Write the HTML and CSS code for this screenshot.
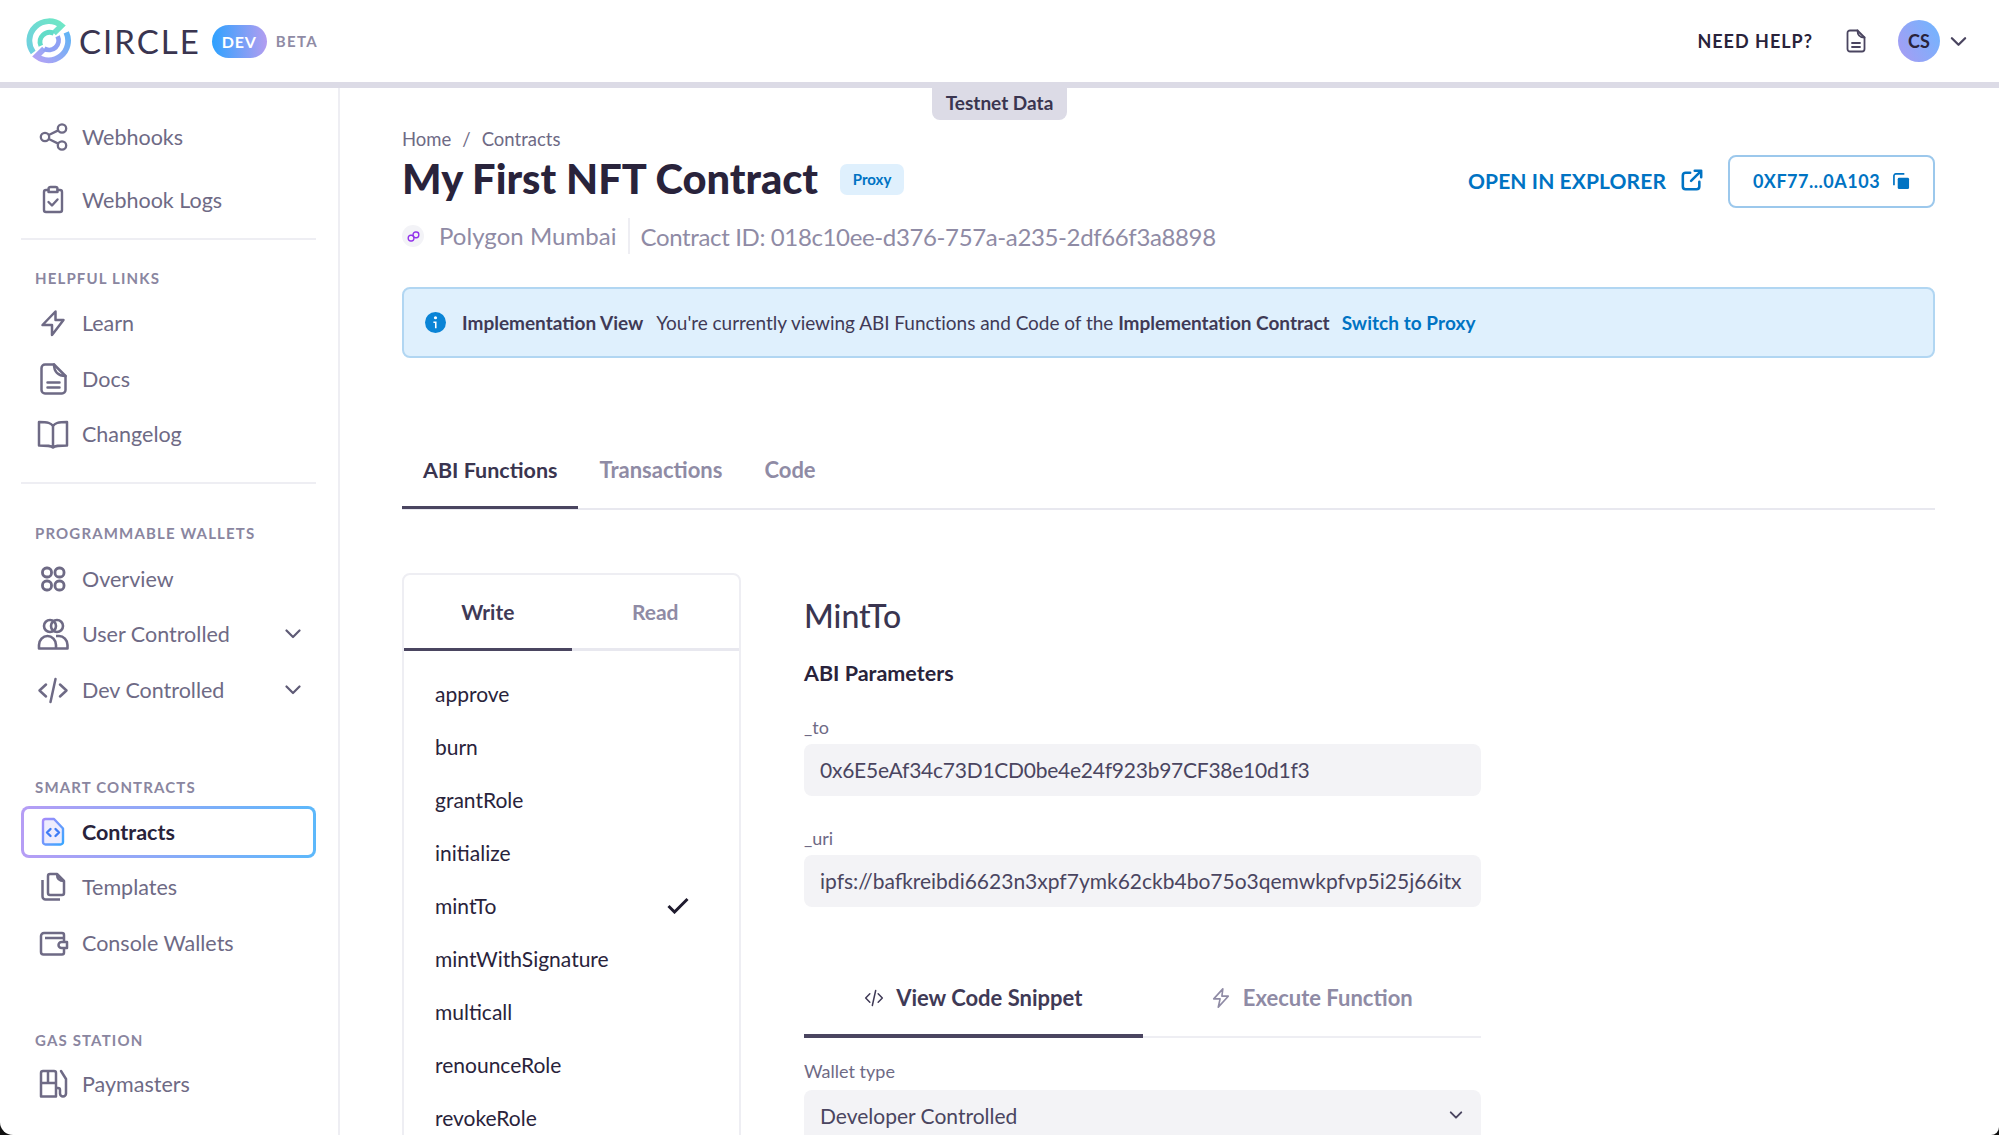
FILE: index.html
```html
<!DOCTYPE html>
<html lang="en">
<head>
<meta charset="utf-8">
<title>Circle Developer Console</title>
<link rel="stylesheet" href="styles.css">
</head>
<body>
<svg class="defs" width="0" height="0" aria-hidden="true">
  <defs>
    <linearGradient id="g-purple-blue" x1="0" y1="0" x2="1" y2="1"><stop offset="0" stop-color="#a78bfa"/><stop offset="1" stop-color="#38a6ff"/></linearGradient>
    <linearGradient id="g-logo-top" x1="0" y1="1" x2="1" y2="0"><stop offset="0" stop-color="#6fcfe0"/><stop offset="1" stop-color="#6ee7c5"/></linearGradient>
    <linearGradient id="g-logo-bot" x1="0" y1="1" x2="1" y2="0"><stop offset="0" stop-color="#b3a2f5"/><stop offset="1" stop-color="#5fb4f5"/></linearGradient>
  </defs>
</svg>
<div class="app">
  <header class="topbar">
    <div class="brand">
      <svg class="logo" viewBox="0 0 48 48" fill="none">
        <path d="M7.500 36A20.500 20.500 0 0 1 37 8L29 16" stroke="url(#g-logo-top)" stroke-width="6"/>
        <path d="M15.500 29A10 10 0 0 1 29 16" stroke="#62dcc8" stroke-width="5"/>
        <path d="M42 15A20.500 20.500 0 0 1 11 40L19 32" stroke="url(#g-logo-bot)" stroke-width="6"/>
        <path d="M33 19A10 10 0 0 1 19 32" stroke="#8ea0f4" stroke-width="5"/>
      </svg>
      <span class="wordmark">CIRCLE</span>
      <span class="dev-pill">DEV</span>
      <span class="beta">BETA</span>
    </div>
    <div class="top-actions">
      <span class="need-help">NEED HELP?</span>
      <svg class="doc-top" viewBox="0 0 20 24" fill="none" stroke="#4a4560" stroke-width="1.800" stroke-linejoin="round" stroke-linecap="round"><path d="M4 1.500h7.500l7 7V20a2.500 2.500 0 0 1-2.500 2.500H4A2.500 2.500 0 0 1 1.500 20V4A2.500 2.500 0 0 1 4 1.500z"/><path d="M11.500 1.500c0 4.500 2 7 7 7M6 14h8M6 18h8"/></svg>
      <span class="avatar">CS</span>
      <svg class="chev-top" viewBox="0 0 18 11" fill="none" stroke="#4a4560" stroke-width="2.400" stroke-linecap="round" stroke-linejoin="round"><path d="M2 2l7 7 7-7"/></svg>
    </div>
  </header>
  <div class="body-row">
    <nav class="sidebar">
      <a class="nav-item item-tall"><svg class="ico" viewBox="0 0 32 32" fill="none" stroke="#6e6a85" stroke-width="2.300"><circle cx="8" cy="16" r="4.200"/><circle cx="25" cy="7.500" r="4.200"/><circle cx="25" cy="24.500" r="4.200"/><path d="M11.800 14l9.400-4.600M11.800 18l9.400 4.600"/></svg>Webhooks</a>
      <a class="nav-item item-tall"><svg class="ico" viewBox="0 0 32 32" fill="none" stroke="#6e6a85" stroke-width="2.400" stroke-linejoin="round" stroke-linecap="round"><path d="M11.500 6H9a2 2 0 0 0-2 2v18a2 2 0 0 0 2 2h14a2 2 0 0 0 2-2V8a2 2 0 0 0-2-2h-2.500"/><path d="M11.500 8V5c0-1.500 1-2 2-2h5c1 0 2 .5 2 2v3zM11.500 18l3.500 3.500 5.500-6"/></svg>Webhook Logs</a>
      <hr class="nav-div div-1">
      <div class="nav-label label-helpful">HELPFUL LINKS</div>
      <a class="nav-item"><svg class="ico" viewBox="0 0 32 32" fill="none" stroke="#6e6a85" stroke-width="2.500" stroke-linejoin="round"><path d="M18.500 4.500L5.500 18H15v10l11.500-15h-8z"/></svg>Learn</a>
      <a class="nav-item"><svg class="ico" viewBox="0 0 32 32" fill="none" stroke="#6e6a85" stroke-width="2.500" stroke-linejoin="round" stroke-linecap="round"><path d="M8 1.500h9L28.500 13v14a3.500 3.500 0 0 1-3.500 3.500H8A3.500 3.500 0 0 1 4.500 27V5A3.500 3.500 0 0 1 8 1.500z"/><path d="M17 1.500c0 7 4 11.500 11.500 11.500M10.500 19.500h12M10.500 24.500h12"/></svg>Docs</a>
      <a class="nav-item"><svg class="ico" viewBox="0 0 32 32" fill="none" stroke="#6e6a85" stroke-width="2.500" stroke-linejoin="round"><path d="M16 8c-2-3-5-4-14-4v23.500c9 0 12 0 14 2 2-2 5-2 14-2V4c-9 0-12 1-14 4zM16 8v21"/></svg>Changelog</a>
      <hr class="nav-div div-2">
      <div class="nav-label label-wallets">PROGRAMMABLE WALLETS</div>
      <a class="nav-item"><svg class="ico" viewBox="0 0 32 32" fill="none" stroke="#6e6a85" stroke-width="2.800"><rect x="5.500" y="5" width="9" height="9" rx="4"/><rect x="18" y="5" width="9" height="9" rx="4"/><rect x="5.500" y="18" width="9" height="9" rx="4"/><rect x="18" y="18" width="9" height="9" rx="4"/></svg>Overview</a>
      <a class="nav-item"><svg class="ico" viewBox="0 0 32 32" fill="none" stroke="#6e6a85" stroke-width="2.600" stroke-linejoin="round"><circle cx="13" cy="8" r="6"/><circle cx="20" cy="8" r="6"/><path d="M2 30.500V27c0-5 4-9 8.500-9s8.500 4 8.500 9v3.500zM19 18h3c4.500 0 8.500 4 8.500 9v3.500H19"/></svg>User Controlled<svg class="chev" viewBox="0 0 16 10" fill="none" stroke="#5f5b76" stroke-width="2.200" stroke-linecap="round" stroke-linejoin="round"><path d="M1.500 1.500L8 8l6.500-6.500"/></svg></a>
      <a class="nav-item"><svg class="ico" viewBox="0 0 32 32" fill="none" stroke="#6e6a85" stroke-width="2.500" stroke-linecap="round" stroke-linejoin="round"><path d="M9 10.500l-6.500 6 6.500 6M23 10.500l6.500 6-6.500 6M18.500 5l-5 23"/></svg>Dev Controlled<svg class="chev" viewBox="0 0 16 10" fill="none" stroke="#5f5b76" stroke-width="2.200" stroke-linecap="round" stroke-linejoin="round"><path d="M1.500 1.500L8 8l6.500-6.500"/></svg></a>
      <div class="nav-label label-contracts">SMART CONTRACTS</div>
      <a class="nav-item active"><svg class="ico" viewBox="0 0 32 32" fill="none" stroke-width="2.400" stroke-linejoin="round"><path d="M8.500 3H17l9 9.500V26a2.500 2.500 0 0 1-2.500 2.500h-15A2.500 2.500 0 0 1 6 26V5.500A2.500 2.500 0 0 1 8.500 3z" stroke="url(#g-purple-blue)" fill="#eeecfd"/><path d="M13.500 13l-3.500 3.500 3.500 3.500M18.500 13l3.500 3.500-3.500 3.500" stroke="#3f7cf5" stroke-linecap="round"/></svg>Contracts</a>
      <a class="nav-item"><svg class="ico" viewBox="0 0 32 32" fill="none" stroke="#6e6a85" stroke-width="2.500" stroke-linejoin="round"><path d="M13 3h7l7 7v12a2 2 0 0 1-2 2H13a2 2 0 0 1-2-2V5a2 2 0 0 1 2-2z"/><path d="M20 3c0 4.500 2 7 7 7M5.500 9v16.500a3 3 0 0 0 3 3H23"/></svg>Templates</a>
      <a class="nav-item"><svg class="ico" viewBox="0 0 32 32" fill="none" stroke="#6e6a85" stroke-width="2.500" stroke-linejoin="round"><path d="M27 11V8a2 2 0 0 0-2-2H7a3 3 0 0 0-3 3v16a2.500 2.500 0 0 0 2.500 2.500H25a2 2 0 0 0 2-2V11H8"/><path d="M30 15h-5.500a3 3 0 0 0 0 6H30z" fill="#fff"/></svg>Console Wallets</a>
      <div class="nav-label label-gas">GAS STATION</div>
      <a class="nav-item"><svg class="ico" viewBox="0 0 32 32" fill="none" stroke="#6e6a85" stroke-width="2.500" stroke-linejoin="round" stroke-linecap="round"><path d="M4 28.500V5a2 2 0 0 1 2-2h11a2 2 0 0 1 2 2v23.500zM4 15h15M11 3v12M19 20h2a2 2 0 0 1 2 2v3.500a3 3 0 0 0 6 0V11l-5-8"/></svg>Paymasters</a>
    </nav>
    <main class="main">
      <span class="testnet">Testnet Data</span>
      <div class="crumbs"><span>Home</span><span class="slash">/</span><span>Contracts</span></div>
      <div class="title-row">
        <h1>My First NFT Contract</h1>
        <span class="proxy">Proxy</span>
        <div class="title-actions">
          <a class="explorer">OPEN IN EXPLORER
            <svg class="ext" viewBox="0 0 24 24" fill="none" stroke="#0073c3" stroke-width="2.800" stroke-linecap="round" stroke-linejoin="round"><path d="M10 4H5a3 3 0 0 0-3 3v12a3 3 0 0 0 3 3h12a3 3 0 0 0 3-3v-5M11 13L22 2M15 2h7v7"/></svg>
          </a>
          <button class="addr">0XF77...0A103
            <svg class="copy" viewBox="0 0 18 18"><path d="M1 13V3a2 2 0 0 1 2-2h9" fill="none" stroke="#0073c3" stroke-width="1.800"/><rect x="5" y="5" width="12" height="12" rx="1.500" fill="#0073c3"/></svg>
          </button>
        </div>
      </div>
      <div class="meta-row">
        <span class="chain-ico"><svg viewBox="0 0 16 16" fill="none" stroke="#9333ea" stroke-width="1.700"><rect x="1.500" y="6.500" width="7" height="7" rx="3"/><rect x="7.500" y="2.500" width="7" height="7" rx="3"/></svg></span>
        <span class="chain">Polygon Mumbai</span>
        <span class="contract-id">Contract ID: 018c10ee-d376-757a-a235-2df66f3a8898</span>
      </div>
      <div class="alert">
        <svg class="info" viewBox="0 0 20 20"><circle cx="10" cy="10" r="10" fill="#0a84d6"/><circle cx="10" cy="5.500" r="1.500" fill="#fff"/><path d="M8 9h3v6.500H9.500V10.500H8z" fill="#fff"/></svg>
        <strong>Implementation View</strong>
        <span class="alert-text">You're currently viewing ABI Functions and Code of the <strong>Implementation Contract</strong></span>
        <a class="switch">Switch to Proxy</a>
      </div>
      <div class="tabs">
        <a class="tab on">ABI Functions</a>
        <a class="tab">Transactions</a>
        <a class="tab">Code</a>
      </div>
      <div class="content">
        <section class="fn-panel">
          <div class="fn-tabs"><a class="fn-tab on">Write</a><a class="fn-tab">Read</a></div>
          <ul class="fn-list">
            <li>approve</li>
            <li>burn</li>
            <li>grantRole</li>
            <li>initialize</li>
            <li>mintTo<svg class="check" viewBox="0 0 22 17" fill="none" stroke="#1f1b2e" stroke-width="3"><path d="M1.500 9l6 6L20.500 2"/></svg></li>
            <li>mintWithSignature</li>
            <li>multicall</li>
            <li>renounceRole</li>
            <li>revokeRole</li>
          </ul>
        </section>
        <section class="detail">
          <h2>MintTo</h2>
          <div class="abi-head">ABI Parameters</div>
          <label class="field-label label-to">_to</label>
          <div class="input input-addr">0x6E5eAf34c73D1CD0be4e24f923b97CF38e10d1f3</div>
          <label class="field-label label-uri">_uri</label>
          <div class="input"><span class="clip">ipfs://bafkreibdi6623n3xpf7ymk62ckb4bo75o3qemwkpfvp5i25j66itx</span></div>
          <div class="sub-tabs">
            <a class="sub-tab on"><svg viewBox="0 0 24 20" fill="none" stroke="#3f3a56" stroke-width="1.800" stroke-linecap="round" stroke-linejoin="round"><path d="M7 5l-5 5 5 5M17 5l5 5-5 5M14 1l-4 18"/></svg>View Code Snippet</a>
            <a class="sub-tab"><svg viewBox="0 0 20 22" fill="none" stroke="#8f8ba5" stroke-width="1.800" stroke-linejoin="round"><path d="M12 1L2 12h7l-2 9 11-12h-7z"/></svg>Execute Function</a>
          </div>
          <label class="field-label label-wallet">Wallet type</label>
          <div class="input select">Developer Controlled<svg class="chev" viewBox="0 0 16 10" fill="none" stroke="#4a4560" stroke-width="2.200" stroke-linecap="round" stroke-linejoin="round"><path d="M2 2l6 6 6-6"/></svg></div>
        </section>
      </div>
    </main>
  </div>
</div>
</body>
</html>
```
FILE: styles.css
```css
* { box-sizing: border-box; }
html, body { margin: 0; height: 100%; background: #111; overflow: hidden; }
body { font-family: "Lato", "Noto Sans", sans-serif; color: #29233b; }
.defs { position: absolute; }
.app { width: 1999px; height: 1135px; overflow: hidden; display: flex; flex-direction: column; background: #fff; border-radius: 0 0 8px 13px; }
a { color: inherit; text-decoration: none; }

.topbar { height: 88px; flex: none; border-bottom: 6px solid #dcdbe6; display: flex; justify-content: space-between; align-items: center; padding: 0 32px 0 26px; }
.brand { display: flex; align-items: center; }
.logo { width: 46px; height: 46px; }
.wordmark { font-size: 33px; letter-spacing: 2px; color: #3a3550; margin-left: 7px; font-weight: 400; }
.dev-pill { margin-left: 11px; width: 55px; height: 33px; border-radius: 17px; background: linear-gradient(90deg, #2ea2ff, #b39df0); color: #fff; font-weight: 700; font-size: 16px; letter-spacing: .8px; display: flex; align-items: center; justify-content: center; }
.beta { margin-left: 9px; color: #8f8ba5; font-weight: 700; font-size: 15px; letter-spacing: 1.300px; }
.top-actions { display: flex; align-items: center; }
.need-help { font-size: 18px; font-weight: 700; letter-spacing: 1px; color: #29233b; }
.doc-top { width: 20px; height: 24px; margin-left: 33px; }
.avatar { margin-left: 32px; width: 42px; height: 42px; border-radius: 50%; background: linear-gradient(60deg, #a99bf2, #6fb6ff); font-size: 18px; font-weight: 700; color: #29233b; display: flex; align-items: center; justify-content: center; }
.chev-top { width: 17px; height: 11px; margin-left: 10px; }

.body-row { flex: 1; display: flex; min-height: 0; }
.sidebar { width: 340px; flex: none; border-right: 2px solid #eeeef3; padding: 17.500px 22px 0 21px; display: flex; flex-direction: column; }
.nav-item { display: flex; align-items: center; height: 55.500px; padding-left: 15.500px; font-size: 21.500px; color: #6e6a85; flex: none; }
.item-tall { height: 63px; }
.ico { width: 32px; height: 32px; flex: none; margin-right: 13.500px; }
.chev { width: 16px; height: 10px; margin-left: auto; margin-right: 15px; }
.nav-div { width: 100%; border: 0; border-top: 2px solid #eeeef3; margin: 0; flex: none; }
.div-1 { margin-top: 6px; }
.div-2 { margin-top: 20px; }
.nav-label { font-size: 15px; font-weight: 700; letter-spacing: 1.150px; color: #8a86a0; padding-left: 14px; height: 20px; line-height: 20px; flex: none; }
.label-helpful { margin-top: 28px; margin-bottom: 8px; }
.label-wallets { margin-top: 39px; margin-bottom: 8px; }
.label-contracts { margin-top: 59px; margin-bottom: 7px; }
.label-gas { margin-top: 59px; margin-bottom: 7px; }
.nav-item.active { height: 52px; margin: 2px 0; border: 3px solid transparent; border-radius: 8px; background: linear-gradient(#fff, #fff) padding-box, linear-gradient(90deg, #b69df5, #5cb8fb) border-box; font-weight: 700; color: #29233b; padding-left: 12.500px; }

.main { flex: 1; min-width: 0; padding: 0 64px 0 62px; position: relative; }
.testnet { position: absolute; left: 592px; top: 0; width: 135px; height: 32px; padding-bottom: 3px; background: #dcdbe6; border-radius: 0 0 8px 8px; font-size: 19px; font-weight: 700; color: #3a3550; display: flex; align-items: center; justify-content: center; }
.crumbs { padding-top: 39px; height: 63px; font-size: 18.500px; color: #6e6a85; display: flex; gap: 11px; line-height: 24px; }
.title-row { display: flex; align-items: center; height: 56px; }
h1 { margin: -2px 0 0; font-size: 41.600px; font-weight: 900; color: #29233b; }
.proxy { margin-left: 22px; width: 64px; height: 31px; border-radius: 7px; background: #dff0fd; color: #0073c3; font-size: 15px; font-weight: 700; display: flex; align-items: center; justify-content: center; }
.title-actions { margin-left: auto; display: flex; align-items: center; padding-top: 4px; }
.explorer { display: flex; align-items: center; color: #0073c3; font-weight: 700; font-size: 21px; letter-spacing: .1px; margin-top: -2px; }
.ext { width: 22px; height: 22px; margin-left: 15px; }
.addr { margin-left: 25px; width: 207px; height: 53px; border: 2px solid #9cc8ec; border-radius: 8px; background: #fff; color: #0073c3; font: 700 18px "Lato", sans-serif; letter-spacing: .5px; display: flex; align-items: center; justify-content: center; }
.copy { width: 17px; height: 17px; margin-left: 13px; }
.meta-row { display: flex; align-items: center; height: 44px; margin-top: 7px; font-size: 24px; color: #8f8ba5; }
.chain-ico { width: 22px; height: 22px; border-radius: 50%; background: #f3f3f7; display: flex; align-items: center; justify-content: center; margin-right: 15px; }
.chain-ico svg { width: 13px; height: 13px; }
.chain { padding-right: 11px; height: 36px; line-height: 36px; border-right: 2px solid #eeeef3; letter-spacing: .05px; }
.contract-id { padding-left: 11px; letter-spacing: -.37px; }
.alert { margin-top: 29px; height: 71px; border: 2px solid #b1d6f2; border-radius: 8px; background: #dff0fd; display: flex; align-items: center; padding-left: 21px; font-size: 19px; color: #3f3a56; }
.alert strong { font-weight: 700; }
.info { width: 21px; height: 21px; margin-right: 16px; flex: none; }
.alert-text { margin-left: 13px; letter-spacing: -.03px; }
.switch { margin-left: 12px; color: #0073c3; font-weight: 700; letter-spacing: .05px; }
.tabs { margin-top: 75px; height: 77px; border-bottom: 2px solid #e8e8ef; display: flex; }
.tab { height: 76px; padding: 0 21px; display: flex; align-items: center; font-size: 22px; font-weight: 700; color: #8f8ba5; border-bottom: 3px solid transparent; }
.tab.on { font-size: 21.500px; color: #3a3550; border-bottom-color: #4a4560; }

.content { margin-top: 63px; display: flex; align-items: flex-start; }
.fn-panel { width: 339px; flex: none; height: 700px; border: 2px solid #eeeef3; border-radius: 8px; }
.fn-tabs { display: flex; height: 76px; border-bottom: 3px solid #e8e8ef; }
.fn-tab { width: 50%; height: 76px; display: flex; align-items: center; justify-content: center; font-size: 21px; font-weight: 700; color: #8f8ba5; border-bottom: 3px solid transparent; }
.fn-tab.on { color: #3f3a56; border-bottom-color: #4a4560; }
.fn-list { list-style: none; margin: 15.500px 0 0; padding: 0; }
.fn-list li { height: 53px; padding: 0 50px 0 31px; display: flex; align-items: center; justify-content: space-between; font-size: 21px; color: #29233b; }
.check { width: 22px; height: 17px; }
.detail { margin-left: 63px; width: 677px; flex: none; }
h2 { margin: 22px 0 0; height: 42px; line-height: 42px; font-size: 32px; font-weight: 500; color: #3a3550; }
.abi-head { margin-top: 23px; font-size: 21.500px; font-weight: 700; color: #29233b; height: 26px; line-height: 26px; }
.field-label { display: block; font-size: 18px; color: #6e6a85; height: 22px; line-height: 22px; }
.label-to { margin-top: 30px; }
.label-uri { margin-top: 31px; }
.input { margin-top: 6px; height: 52px; border-radius: 8px; background: #f3f3f6; padding: 0 16px 2px; display: flex; align-items: center; font-size: 21px; color: #4a4560; white-space: nowrap; overflow: hidden; }
.input-addr { letter-spacing: -.25px; }
.clip { overflow: hidden; }
.sub-tabs { margin-top: 56px; height: 75px; border-bottom: 2px solid #eeeef3; display: flex; }
.sub-tab { width: 50%; height: 75px; padding-bottom: 2px; display: flex; align-items: center; justify-content: center; gap: 12px; font-size: 22px; font-weight: 700; color: #8f8ba5; border-bottom: 4px solid transparent; }
.sub-tab.on { color: #3f3a56; border-bottom-color: #4a4560; }
.sub-tab svg { width: 20px; height: 20px; }
.label-wallet { margin-top: 22px; }
.select { margin-top: 8px; }
.select .chev { margin-right: 2px; width: 14px; }
```
